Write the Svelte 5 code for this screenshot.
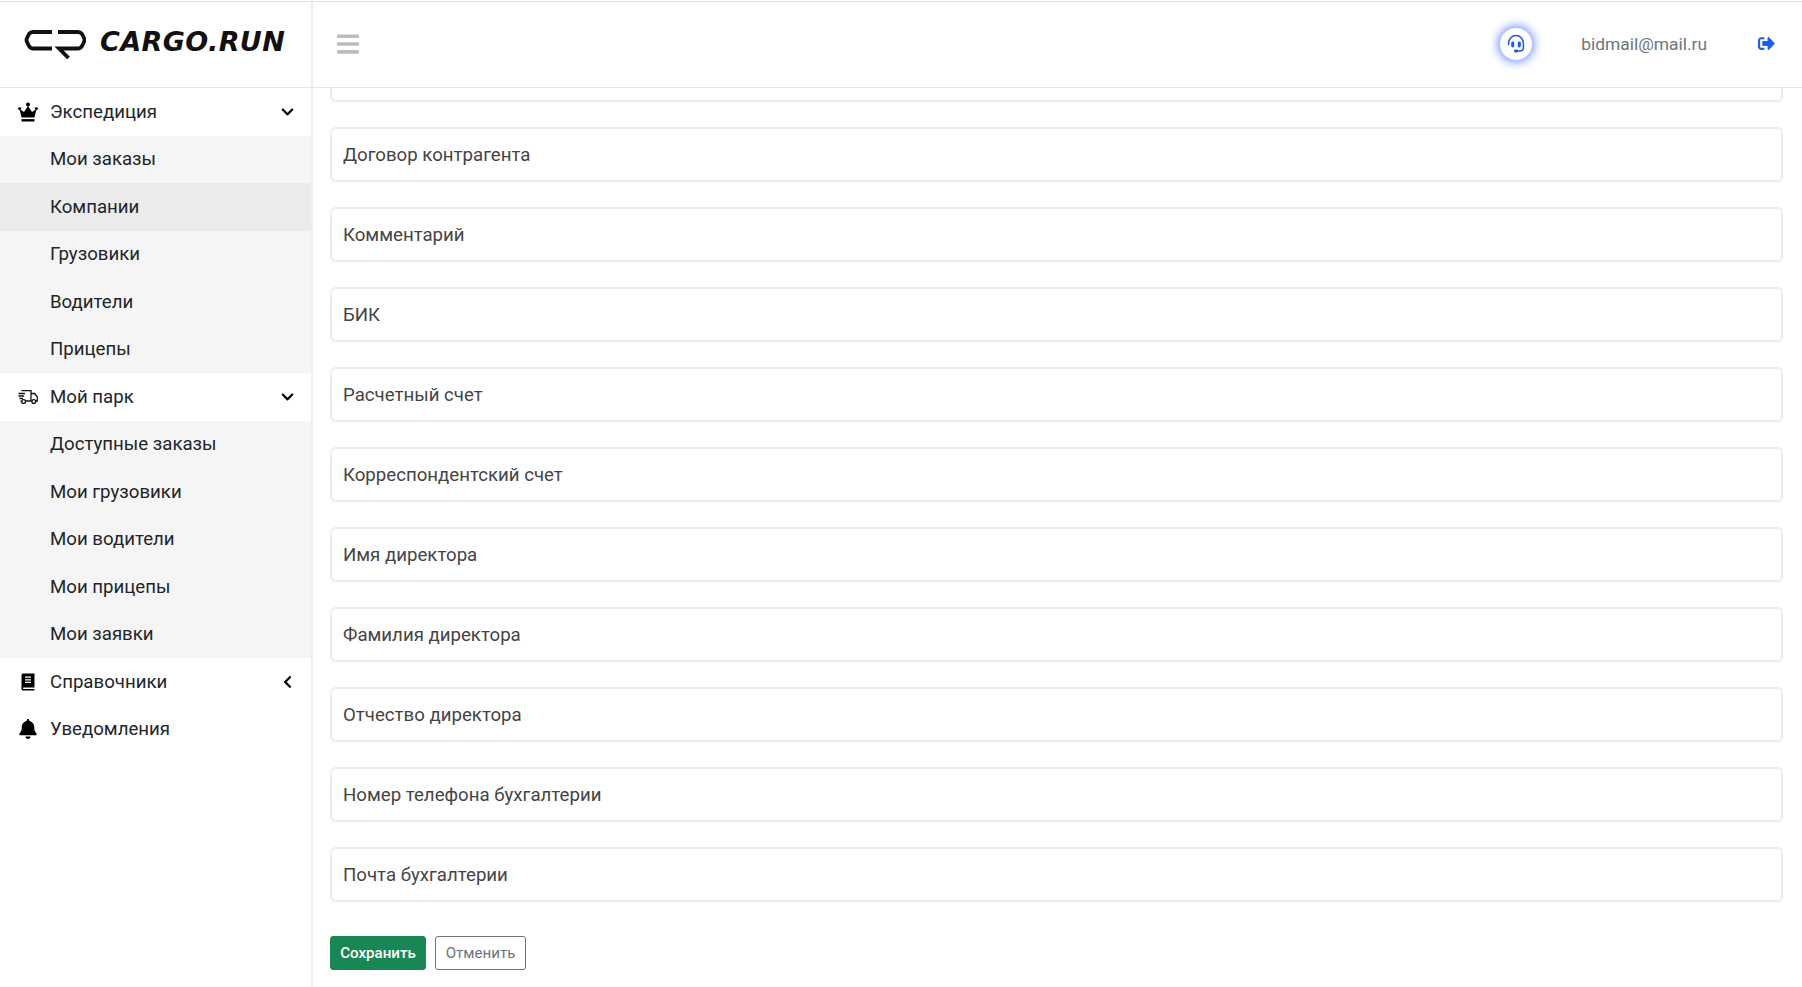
<script>
	const expedition = ['Мои заказы', 'Компании', 'Грузовики', 'Водители', 'Прицепы'];
	const park = ['Доступные заказы', 'Мои грузовики', 'Мои водители', 'Мои прицепы', 'Мои заявки'];
	const fields = [
		'',
		'Договор контрагента',
		'Комментарий',
		'БИК',
		'Расчетный счет',
		'Корреспондентский счет',
		'Имя директора',
		'Фамилия директора',
		'Отчество директора',
		'Номер телефона бухгалтерии',
		'Почта бухгалтерии'
	];
</script>

<div class="page">
	<aside class="sidebar">
		<div class="logo">
			<svg class="logo-mark" viewBox="0 0 62 31" width="62" height="31" aria-hidden="true">
				<path d="M28 4H9Q6.5 4 5 6L3 10Q2 12 3 14L5 18Q6.5 20.5 9 20.5H28" fill="none" stroke="#111" stroke-width="3.8" />
				<path d="M34 4H54Q56.5 4 58 6L60 10Q61 12 60 14L58 18Q56.5 20.5 54 20.5H35L44.5 30" fill="none" stroke="#111" stroke-width="3.8" />
			</svg>
			<span class="logo-text">CARGO.RUN</span>
		</div>
		<nav>
			<div class="item">
				<svg class="icon" viewBox="0 0 20 19" aria-hidden="true">
					<circle cx="10" cy="2" r="2" />
					<circle cx="1.6" cy="6" r="1.5" />
					<circle cx="18.4" cy="6" r="1.5" />
					<path d="M1.5 6.5L6 9.5L10 3.5L14 9.5L18.5 6.5L16.5 15H3.5Z" />
					<rect x="3.5" y="16.6" width="13" height="2.4" />
				</svg>
				<span>Экспедиция</span>
				<svg class="arrow" viewBox="0 0 448 512" aria-hidden="true"><path d="M207.029 381.476L12.686 187.132c-9.373-9.373-9.373-24.569 0-33.941l22.667-22.667c9.357-9.357 24.522-9.375 33.901-.04L224 284.505l154.745-154.021c9.379-9.335 24.544-9.317 33.901.04l22.667 22.667c9.373 9.373 9.373 24.569 0 33.941L240.971 381.476c-9.373 9.372-24.569 9.372-33.942 0z" /></svg>
			</div>
			<div class="group">
				{#each expedition as name}
					<div class="sub" class:active={name === 'Компании'}>{name}</div>
				{/each}
			</div>
			<div class="item">
				<svg class="icon" viewBox="0 0 20 15" aria-hidden="true">
					<path d="M3.5 1.2H13V11.5H8M13 4H16.5L19.3 7.5V11.5H18M13 11.5H13.7M2.5 11.5H3.2M0.5 4H7M0.5 6.5H6M1.5 9H5" fill="none" stroke="#111" stroke-width="1.3" />
					<circle cx="5.6" cy="12" r="1.9" fill="none" stroke="#111" stroke-width="1.3" />
					<circle cx="15.8" cy="12" r="1.9" fill="none" stroke="#111" stroke-width="1.3" />
				</svg>
				<span>Мой парк</span>
				<svg class="arrow" viewBox="0 0 448 512" aria-hidden="true"><path d="M207.029 381.476L12.686 187.132c-9.373-9.373-9.373-24.569 0-33.941l22.667-22.667c9.357-9.357 24.522-9.375 33.901-.04L224 284.505l154.745-154.021c9.379-9.335 24.544-9.317 33.901.04l22.667 22.667c9.373 9.373 9.373 24.569 0 33.941L240.971 381.476c-9.373 9.372-24.569 9.372-33.942 0z" /></svg>
			</div>
			<div class="group">
				{#each park as name}
					<div class="sub">{name}</div>
				{/each}
			</div>
			<div class="item">
				<svg class="icon" viewBox="0 0 20 18" aria-hidden="true">
					<path d="M3.5 2Q3.5 0.5 5 0.5H16.5V14.5H5.5Q5 14.5 5 15.2Q5 16 5.5 16H16.5V17.5H5Q3.5 17.5 3.5 16Z" />
					<path d="M7 4.2H13M7 6.8H13M7 9.4H13" stroke="#fff" stroke-width="1.2" fill="none" />
				</svg>
				<span>Справочники</span>
				<svg class="arrow left" viewBox="0 0 320 512" aria-hidden="true"><path d="M34.52 239.03L228.87 44.69c9.37-9.37 24.57-9.37 33.94 0l22.67 22.67c9.36 9.36 9.37 24.52.04 33.9L131.49 256l154.02 154.75c9.34 9.38 9.32 24.54-.04 33.9l-22.67 22.67c-9.37 9.37-24.57 9.37-33.94 0L34.52 272.97c-9.37-9.37-9.37-24.57 0-33.94z" /></svg>
			</div>
			<div class="item">
				<svg class="icon" viewBox="0 0 448 512" aria-hidden="true"><path d="M224 512c35.32 0 63.97-28.65 63.97-64H160.03c0 35.35 28.65 64 63.97 64zm215.39-149.71c-19.32-20.76-55.47-51.99-55.47-154.29 0-77.7-54.48-139.9-127.94-155.16V32c0-17.67-14.32-32-31.98-32s-31.98 14.33-31.98 32v20.84C118.56 68.1 64.08 130.3 64.08 208c0 102.3-36.15 133.53-55.47 154.29-6 6.45-8.66 14.16-8.61 21.71.11 16.4 12.98 32 32.1 32h383.8c19.12 0 32-15.6 32.1-32 .05-7.55-2.61-15.27-8.61-21.71z" /></svg>
				<span>Уведомления</span>
			</div>
		</nav>
	</aside>

	<div class="right">
		<header class="topbar">
			<svg class="burger" viewBox="0 0 448 512" aria-hidden="true"><path d="M16 132h416c8.837 0 16-7.163 16-16V76c0-8.837-7.163-16-16-16H16C7.163 60 0 67.163 0 76v40c0 8.837 7.163 16 16 16zm0 160h416c8.837 0 16-7.163 16-16v-40c0-8.837-7.163-16-16-16H16c-8.837 0-16 7.163-16 16v40c0 8.837 7.163 16 16 16zm0 160h416c8.837 0 16-7.163 16-16v-40c0-8.837-7.163-16-16-16H16c-8.837 0-16 7.163-16 16v40c0 8.837 7.163 16 16 16z" /></svg>
			<div class="support">
				<svg viewBox="0 0 20 20" width="20" height="20" aria-hidden="true">
					<path d="M2.6 11V9A7.4 7.4 0 0 1 17.4 9V13.5Q17.4 17 13.5 17H10" fill="none" stroke="#1a56f0" stroke-width="1.5" />
					<rect x="5.2" y="7.5" width="3" height="6" rx="1.4" fill="#1a56f0" />
					<rect x="11.8" y="7.5" width="3" height="6" rx="1.4" fill="#1a56f0" />
					<rect x="8" y="15.6" width="4" height="2.8" rx="1.3" fill="#1a56f0" />
				</svg>
			</div>
			<span class="email">bidmail@mail.ru</span>
			<svg class="logout" viewBox="0 0 512 512" aria-hidden="true"><path d="M497 273L329 441c-15 15-41 4.5-41-17v-96H152c-13.3 0-24-10.7-24-24v-96c0-13.3 10.7-24 24-24h136V88c0-21.4 25.9-32 41-17l168 168c9.3 9.4 9.3 24.6 0 34zM192 436v-40c0-6.6-5.4-12-12-12H96c-17.7 0-32-14.3-32-32V160c0-17.7 14.3-32 32-32h84c6.6 0 12-5.4 12-12V76c0-6.6-5.4-12-12-12H96c-53 0-96 43-96 96v192c0 53 43 96 96 96h84c6.6 0 12-5.4 12-12z" /></svg>
		</header>
		<main class="content">
			<form class="form">
				{#each fields as field}
					<input class="field" type="text" placeholder={field} />
				{/each}
				<div class="actions">
					<button type="button" class="btn save">Сохранить</button>
					<button type="button" class="btn cancel">Отменить</button>
				</div>
			</form>
		</main>
	</div>
</div>

<style>
	:global(body) {
		margin: 0;
		background: #fff;
		font-family: Roboto, 'Liberation Sans', sans-serif;
		color: #212529;
	}
	.page {
		display: flex;
		height: 986px;
		overflow: hidden;
		border-top: 1px solid #e4e4e4;
		margin-top: 1px;
		box-sizing: border-box;
	}
	.sidebar {
		width: 313px;
		flex: none;
		box-sizing: border-box;
		border-right: 2px solid #efefef;
	}
	.logo {
		height: 86px;
		display: flex;
		align-items: flex-start;
		box-sizing: border-box;
		padding: 26px 0 0 24px;
		border-bottom: 1px solid #e4e4e4;
		width: 311px;
	}
	.logo-mark {
		flex: none;
	}
	.logo-text {
		margin: -2px 0 0 14px;
		font-family: 'DejaVu Sans', sans-serif;
		font-weight: 700;
		font-style: italic;
		font-size: 27px;
		line-height: 32px;
		letter-spacing: 0.4px;
		color: #111;
	}
	.item,
	.sub {
		height: 47.5px;
		display: flex;
		align-items: center;
		font-size: 18.65px;
		color: #212529;
	}
	.item {
		padding: 0 17px 0 18px;
		background: #fff;
	}
	.icon {
		width: 20px;
		height: 20px;
		margin-right: 12px;
		flex: none;
	}
	.arrow {
		width: 13px;
		height: 14px;
		margin-left: auto;
	}
	.arrow.left {
		width: 9px;
		margin-right: 2px;
	}
	.group {
		background: #f5f5f5;
	}
	.sub {
		padding-left: 50px;
	}
	.sub.active {
		background: #ebebeb;
	}
	.right {
		flex: 1;
		min-width: 0;
		display: flex;
		flex-direction: column;
	}
	.topbar {
		height: 86px;
		flex: none;
		display: flex;
		align-items: center;
		box-sizing: border-box;
		border-bottom: 1px solid #e4e4e4;
		padding: 0 0 2px 24px;
		background: #fff;
	}
	.burger {
		width: 22px;
		height: 26px;
		fill: #bbb;
	}
	.support {
		margin-left: auto;
		width: 32px;
		height: 32px;
		border-radius: 50%;
		background: #fff;
		box-shadow: 0 0 8px 3px #8aa4ff;
		display: flex;
		align-items: center;
		justify-content: center;
	}
	.email {
		margin-left: 49.5px;
		font-size: 17.4px;
		color: #6c757d;
	}
	.logout {
		width: 17px;
		height: 17px;
		margin: 0 27px 0 51px;
		fill: #1a5cf5;
	}
	.content {
		flex: 1;
		overflow: hidden;
		padding: 0 19px 0 17px;
	}
	.form {
		display: flex;
		flex-direction: column;
		gap: 25px;
		margin-top: -41px;
	}
	.field {
		height: 55px;
		box-sizing: border-box;
		border: 2px solid #ececec;
		border-radius: 6px;
		padding: 0 11px;
		font: 18.65px Roboto, sans-serif;
		width: 100%;
		outline: none;
	}
	.field::placeholder {
		color: #444;
		opacity: 1;
	}
	.actions {
		display: flex;
		gap: 9px;
		margin-top: 9px;
	}
	.btn {
		height: 34px;
		box-sizing: border-box;
		border-radius: 3px;
		font: 15.1px Roboto, sans-serif;
		padding: 0;
	}
	.save {
		width: 96px;
		background: #198754;
		border: 1px solid #198754;
		color: #fff;
		font-weight: 500;
	}
	.cancel {
		width: 91px;
		background: #fff;
		border: 1px solid #6c757d;
		color: #6c757d;
	}
</style>
